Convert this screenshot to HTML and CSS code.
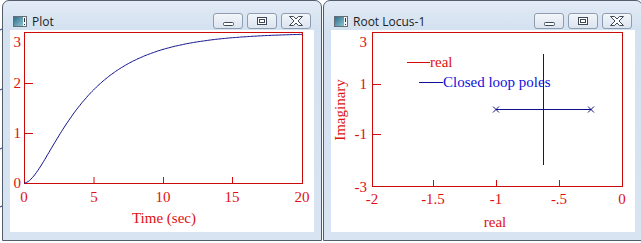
FILE: index.html
```html
<!DOCTYPE html>
<html lang="en">
<head>
    <meta charset="UTF-8">
    <title>Plot / Root Locus</title>
    <link rel="stylesheet" href="styles.css">
</head>
<body>
    <div class="desktop">
        <!-- bits of the window lying behind -->
        <svg class="behind" width="2" height="243">
            <line x1="0" y1="30" x2="2" y2="29" class="navy"/>
            <line x1="0" y1="90" x2="2" y2="89" class="navy"/>
            <line x1="0" y1="149" x2="2" y2="148" class="navy"/>
            <line x1="0" y1="207" x2="2" y2="206" class="navy"/>
        </svg>

        <div class="window">
            <div class="titlebar">
                <svg class="app-icon" width="14" height="11" viewBox="0 0 14 11">
                    <defs>
                        <linearGradient id="ico1" x1="0" y1="0" x2="1" y2="1">
                            <stop offset="0" stop-color="#2f6f8c"/>
                            <stop offset="1" stop-color="#8cc3cf"/>
                        </linearGradient>
                    </defs>
                    <rect x="0.5" y="0.5" width="13" height="10" fill="#f4f6f8" stroke="#676d74"/>
                    <rect x="1" y="1" width="9" height="9" fill="url(#ico1)"/>
                    <line x1="11.5" y1="2" x2="11.5" y2="6" stroke="#30363c"/>
                    <line x1="11.5" y1="8" x2="11.5" y2="9" stroke="#30363c"/>
                </svg>
                <span class="title">Plot</span>
                <div class="controls">
                    <button class="ctl"><svg class="glyph-min" width="11" height="4"><rect x="0.5" y="0.5" width="10" height="3" rx="1" /></svg></button>
                    <button class="ctl"><svg width="10" height="8"><rect x="0.5" y="0.5" width="9" height="7" /><rect x="2.5" y="2.5" width="5" height="3" class="inner"/></svg></button>
                    <button class="ctl"><svg width="14" height="10"><path d="M0.5 0.5H4.5L7 3L9.5 0.5H13.5L9 5L13.5 9.5H9.5L7 7L4.5 9.5H0.5L5 5Z"/></svg></button>
                </div>
            </div>
            <div class="client">
                <svg class="chart" width="304" height="202" viewBox="0 0 304 202">
                    <rect x="14.5" y="2.5" width="278" height="151" class="frame"/>
                    <line x1="14.5" y1="53.5" x2="23" y2="53.5" class="tick"/>
                    <line x1="14.5" y1="103.5" x2="23" y2="103.5" class="tick"/>
                    <line x1="84" y1="153" x2="84" y2="147" class="tick"/>
                    <line x1="153.5" y1="153" x2="153.5" y2="147" class="tick"/>
                    <line x1="222.5" y1="153" x2="222.5" y2="147" class="tick"/>

                    <g class="axis-text end">
                        <text x="11" y="17">3</text>
                        <text x="11" y="58">2</text>
                        <text x="11" y="108">1</text>
                        <text x="11" y="158">0</text>
                    </g>
                    <g class="axis-text mid">
                        <text x="14" y="172">0</text>
                        <text x="84" y="172">5</text>
                        <text x="153" y="172">10</text>
                        <text x="222" y="172">15</text>
                        <text x="292" y="172">20</text>
                        <text x="154" y="193">Time (sec)</text>
                    </g>

                    <polyline id="step-curve" class="curve" points=""/>
                </svg>
            </div>
        </div>

        <div class="window">
            <div class="titlebar">
                <svg class="app-icon" width="14" height="11" viewBox="0 0 14 11">
                    <defs>
                        <linearGradient id="ico2" x1="0" y1="0" x2="1" y2="1">
                            <stop offset="0" stop-color="#2f6f8c"/>
                            <stop offset="1" stop-color="#8cc3cf"/>
                        </linearGradient>
                    </defs>
                    <rect x="0.5" y="0.5" width="13" height="10" fill="#f4f6f8" stroke="#676d74"/>
                    <rect x="1" y="1" width="9" height="9" fill="url(#ico2)"/>
                    <line x1="11.5" y1="2" x2="11.5" y2="6" stroke="#30363c"/>
                    <line x1="11.5" y1="8" x2="11.5" y2="9" stroke="#30363c"/>
                </svg>
                <span class="title">Root Locus-1</span>
                <div class="controls">
                    <button class="ctl"><svg class="glyph-min" width="11" height="4"><rect x="0.5" y="0.5" width="10" height="3" rx="1" /></svg></button>
                    <button class="ctl"><svg width="10" height="8"><rect x="0.5" y="0.5" width="9" height="7" /><rect x="2.5" y="2.5" width="5" height="3" class="inner"/></svg></button>
                    <button class="ctl"><svg width="14" height="10"><path d="M0.5 0.5H4.5L7 3L9.5 0.5H13.5L9 5L13.5 9.5H9.5L7 7L4.5 9.5H0.5L5 5Z"/></svg></button>
                </div>
            </div>
            <div class="client">
                <svg class="chart" width="304" height="202" viewBox="0 0 304 202">
                    <rect x="41.5" y="2.5" width="250" height="154" class="frame"/>
                    <line x1="41.5" y1="54.5" x2="50" y2="54.5" class="tick"/>
                    <line x1="41.5" y1="104.5" x2="50" y2="104.5" class="tick"/>
                    <line x1="102.5" y1="156" x2="102.5" y2="150" class="tick"/>
                    <line x1="165.5" y1="156" x2="165.5" y2="150" class="tick"/>
                    <line x1="228.5" y1="156" x2="228.5" y2="150" class="tick"/>

                    <g class="axis-text end">
                        <text x="36" y="17">3</text>
                        <text x="36" y="59">1</text>
                        <text x="36" y="109">-1</text>
                        <text x="36" y="162">-3</text>
                    </g>
                    <g class="axis-text mid">
                        <text x="41" y="174">-2</text>
                        <text x="102" y="174">-1.5</text>
                        <text x="165" y="174">-1</text>
                        <text x="228" y="174">-.5</text>
                        <text x="291" y="174">0</text>
                        <text x="164" y="197">real</text>
                        <text transform="translate(14 80) rotate(-90)">Imaginary</text>
                    </g>

                    <!-- legend -->
                    <line x1="76" y1="32.5" x2="99" y2="32.5" class="tick"/>
                    <text x="99" y="37" class="axis-text">real</text>
                    <line x1="88" y1="52.5" x2="112" y2="52.5" class="locus"/>
                    <text x="112" y="57" class="legend-blue">Closed loop poles</text>

                    <!-- locus -->
                    <line x1="165" y1="79.5" x2="260" y2="79.5" class="locus"/>
                    <line x1="212.5" y1="24" x2="212.5" y2="135" class="locus"/>
                    <path d="M162 76.5L168 82.5M168 76.5L162 82.5M257 76.5L263 82.5M263 76.5L257 82.5" class="locus"/>
                </svg>
            </div>
        </div>
    </div>

    <script>
        // respuesta al escalon: polos en -1 y -0.25
        const curve = document.getElementById('step-curve');
        const pts = [];
        for (let i = 0; i <= 200; i++) {
            const t = i * 0.1;
            const v = 3 * (1 - (4 / 3) * Math.exp(-0.25 * t) + (1 / 3) * Math.exp(-t));
            pts.push((14 + t * 13.9).toFixed(1) + ',' + (153 - v * 50).toFixed(1));
        }
        curve.setAttribute('points', pts.join(' '));
    </script>
</body>
</html>
```

FILE: styles.css
```css
body {
    margin: 0;
    width: 641px;
    height: 243px;
    overflow: hidden;
    background: #fff;
    font-family: "Open Sans", "Noto Sans", sans-serif;
}
.desktop {
    display: flex;
    align-items: flex-start;
}
.behind {
    flex: none;
}
.navy {
    stroke: #1c2a8c;
    stroke-width: 1;
}
.window {
    flex: none;
    width: 320px;
    height: 241px;
    box-sizing: border-box;
    border: 1px solid #535d6b;
    border-radius: 7px 7px 0 0;
    background: linear-gradient(#e2ebf6, #d4e1f0 28px, #d8e4f2);
    display: flex;
    flex-direction: column;
}
.window + .window {
    margin-left: 1px;
}
.titlebar {
    height: 29px;
    box-sizing: border-box;
    padding: 11px 10px 0 10px;
    display: flex;
    align-items: center;
}
.app-icon {
    flex: none;
}
.title {
    flex: 1;
    margin-left: 5px;
    font-size: 12px;
    color: #1d1d1d;
    white-space: nowrap;
}
.controls {
    display: flex;
    gap: 4px;
}
.ctl {
    width: 30px;
    height: 16px;
    box-sizing: border-box;
    padding: 0;
    border: 1px solid #8e9cb0;
    border-radius: 3px;
    background: linear-gradient(#f3f6fa, #dbe4ef);
    display: flex;
    align-items: center;
    justify-content: center;
}
.ctl svg rect,
.ctl svg path {
    fill: #fff;
    stroke: #3f4957;
    stroke-width: 1;
}
.ctl svg rect.inner {
    fill: none;
}
.glyph-min {
    margin-top: 5px;
}
.client {
    flex: none;
    height: 202px;
    margin: 0 7px;
    background: #fff;
}
.chart {
    display: block;
}
.frame {
    fill: none;
    stroke: #cc0a0a;
    stroke-width: 1;
}
.tick {
    stroke: #d40a0a;
    stroke-width: 1;
}
.axis-text {
    font-family: "Liberation Serif", serif;
    font-size: 15px;
    fill: #e01010;
}
.axis-text.end {
    text-anchor: end;
}
.axis-text.mid {
    text-anchor: middle;
}
.legend-blue {
    font-family: "Liberation Serif", serif;
    font-size: 15px;
    fill: #1010e0;
}
.curve {
    fill: none;
    stroke: #10108e;
    stroke-width: 1;
}
.locus {
    stroke: #10108e;
    stroke-width: 1;
}
```
